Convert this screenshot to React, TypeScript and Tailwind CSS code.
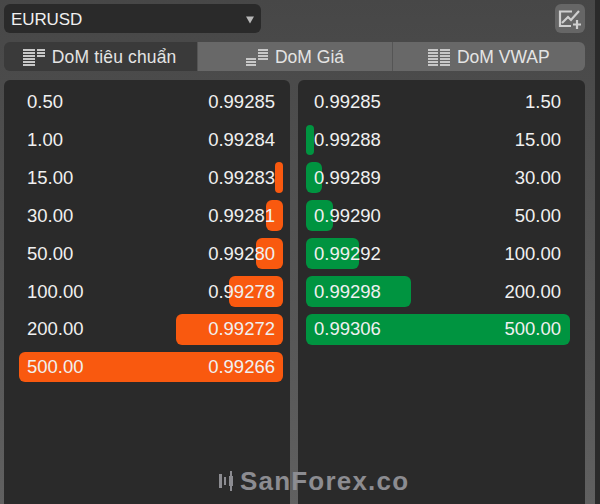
const FONT = "font-['Liberation_Sans',Arial,sans-serif]";

function BarsIcon({ kind }: { kind: "standard" | "price" | "vwap" }) {
  const rows =
    kind === "standard"
      ? [[0, 12, 0], [0, 12, 3], [0, 12, 6], [0, 12, 9], [0, 12, 12], [0, 12, 15], [14, 8, 0], [14, 8, 3], [14, 8, 6]]
      : kind === "price"
      ? [[0, 10, 9], [0, 10, 12], [0, 10, 15], [12, 10, 0], [12, 10, 3], [12, 10, 6], [12, 10, 9]]
      : [[0, 10, 0], [0, 10, 3], [0, 10, 6], [0, 10, 9], [0, 10, 12], [0, 10, 15], [12, 10, 0], [12, 10, 3], [12, 10, 6], [12, 10, 9], [12, 10, 12], [12, 10, 15]];
  return (
    <svg width="22" height="17" viewBox="0 0 22 17" className="shrink-0">
      {rows.map(([x, w, y], i) => (
        <rect key={i} x={x} y={y} width={w} height="2" fill="#c8c8c8" />
      ))}
    </svg>
  );
}

function Tab({ label, kind, active, first, last }: { label: string; kind: "standard" | "price" | "vwap"; active?: boolean; first?: boolean; last?: boolean }) {
  return (
    <div
      className={`flex items-center justify-center gap-[7px] h-[29px] pt-[1px] text-[17.5px] text-[#e4e4e4] ${
        active ? "bg-[#3a3a3a]" : "bg-[#686868]"
      } ${first ? "rounded-l-md w-[194px] tracking-[0.15px] pr-[2px]" : ""} ${last ? "rounded-r-md w-[193px]" : ""} ${!first && !last ? "w-[194px]" : ""}`}
    >
      <BarsIcon kind={kind} />
      <span>{label}</span>
    </div>
  );
}

function Row({ a, b, width, side }: { a: string; b: string; width: number; side: "ask" | "bid" }) {
  const isAsk = side === "ask";
  return (
    <div className="relative h-[30.5px] flex items-center justify-between px-2 text-[18.5px] text-[#f0f0f0]">
      {width > 0 && (
        <div
          className={`absolute top-0 bottom-0 rounded-md ${isAsk ? "right-0 bg-[#f9590f]" : "left-0 bg-[#009440]"}`}
          style={{ width }}
        />
      )}
      <span className="relative">{a}</span>
      <span className="relative">{b}</span>
    </div>
  );
}

const asks: [string, string, number][] = [
  ["0.50", "0.99285", 0],
  ["1.00", "0.99284", 0],
  ["15.00", "0.99283", 8],
  ["30.00", "0.99281", 17],
  ["50.00", "0.99280", 27],
  ["100.00", "0.99278", 54],
  ["200.00", "0.99272", 107],
  ["500.00", "0.99266", 264],
];
const bids: [string, string, number][] = [
  ["0.99285", "1.50", 0],
  ["0.99288", "15.00", 8],
  ["0.99289", "30.00", 16],
  ["0.99290", "50.00", 27],
  ["0.99292", "100.00", 53],
  ["0.99298", "200.00", 105],
  ["0.99306", "500.00", 264],
];

export default function App() {
  return (
    <div className={`${FONT} relative w-[600px] h-[504px] overflow-hidden flex bg-[#2a2a2a]`}>
      <div className="w-[595px] h-full shrink-0 px-[4px] pt-[4px] bg-gradient-to-b from-[#474747] to-[#606060] flex flex-col">
        <div className="flex justify-between h-[29px] w-[581px]">
          <div className="w-[257px] bg-[#2a2a2a] rounded-md flex items-center justify-between pt-[2px] pl-[7px] pr-[7px] text-[17px] tracking-[-0.1px] text-[#f0f0f0]">
            <span>EURUSD</span>
            <svg width="8" height="8" viewBox="0 0 8 8">
              <path d="M0 0.5H8L4 7.5Z" fill="#b8b8b8" />
            </svg>
          </div>
          <div className="w-[30px] bg-[#666666] rounded-md flex items-center justify-center">
            <svg width="24" height="22" viewBox="0 0 24 22" fill="none" stroke="#cfcfcf" strokeWidth="2.2">
              <path d="M14 3.5H2V18H13" />
              <path d="M4 15L10 9L13 12L21 3" />
              <path d="M19 12V21M15 16.5H23" />
            </svg>
          </div>
        </div>
        <div className="mt-[9px] flex w-[581px] gap-0">
          <Tab label="DoM tiêu chuẩn" kind="standard" active first />
          <div className="w-px bg-[#555]" />
          <Tab label="DoM Giá" kind="price" />
          <div className="w-px bg-[#555]" />
          <Tab label="DoM VWAP" kind="vwap" last />
        </div>
        <div className="mt-[9px] flex-1 flex gap-[8px] w-[581px]">
          <div className="w-[286px] bg-[#2a2a2a] rounded-t-md pt-[6.7px] pl-[15px] pr-[7px] flex flex-col gap-[7.4px]">
            {asks.map(([a, b, w]) => (
              <Row key={b} a={a} b={b} width={w} side="ask" />
            ))}
          </div>
          <div className="w-[287px] bg-[#2a2a2a] rounded-t-md pt-[6.7px] pl-[8px] pr-[16px] flex flex-col gap-[7.4px]">
            {bids.map(([a, b, w]) => (
              <Row key={a} a={a} b={b} width={w} side="bid" />
            ))}
          </div>
        </div>
      </div>
      <div className="absolute left-[219px] top-[468px] flex items-center gap-[5px] text-[#8c8c91] font-bold text-[26px] tracking-[1.2px] leading-none">
        <svg width="16" height="24" viewBox="0 0 16 24" fill="#8c8c91">
          <rect x="0" y="5" width="3" height="14" />
          <rect x="5" y="8" width="2" height="8" />
          <rect x="10" y="7" width="4" height="10" />
          <rect x="11" y="2" width="2" height="20" />
        </svg>
        <span>SanForex.co</span>
      </div>
    </div>
  );
}
